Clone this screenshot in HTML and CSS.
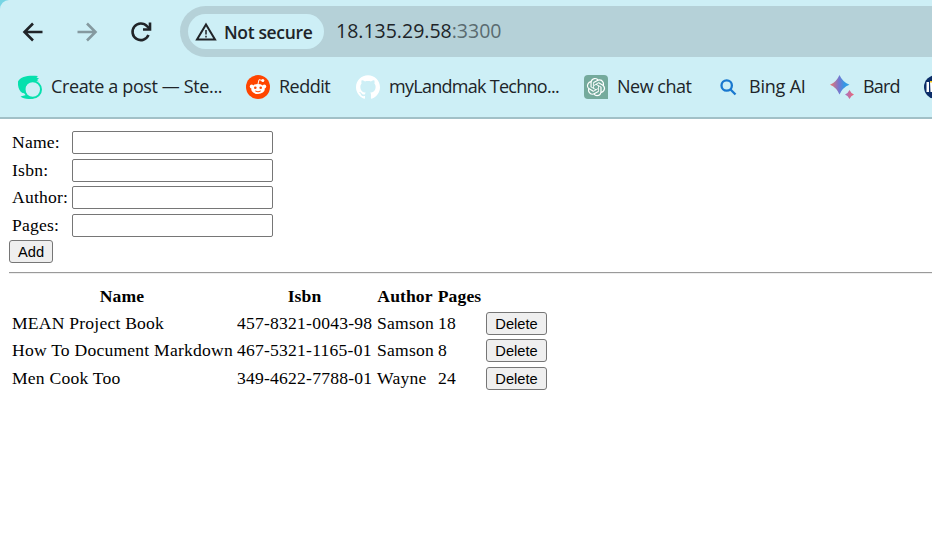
FILE: index.html
```html
<!DOCTYPE html>
<html lang="en">
<head>
<meta charset="utf-8">
<title>Books</title>
<link rel="stylesheet" href="styles.css">
</head>
<body>
<div class="frame">
<header class="chrome">
  <div class="toolbar">
    <svg class="nav back" viewBox="0 0 24 24"><path d="M21.5 12H4M12 3.5 3.5 12l8.500 8.500"/></svg>
    <svg class="nav forward" viewBox="0 0 24 24"><path d="M2.500 12H20M12 3.500 20.500 12 12 20.500"/></svg>
    <svg class="nav reload" viewBox="0 0 24 24"><path d="M19.500 15A8.300 8.300 0 1 1 18 6.200L20.500 8.700"/><path d="M21 2.500V9.500H14"/></svg>
    <div class="omnibox">
      <div class="security">
        <svg viewBox="0 0 22 20"><path d="M11 2.500 20 17.500H2Z"/><path class="mark" d="M11 8v4.500M11 13.700v1.800"/></svg>
        <span>Not secure</span>
      </div>
      <span class="url">18.135.29.58<span class="port">:3300</span></span>
    </div>
  </div>
  <nav class="bookmarks">
    <a class="bm b1"><svg viewBox="0 0 24 24"><circle cx="14.700" cy="14.500" r="8.300" fill="none" stroke="#06e0ad" stroke-width="2"/><path fill="#06e0ad" d="M0 6.500C3 1 11 0 20 1l-1.500 1.500L21 3.500 19 5l2 1.500C12 4.500 7 9 7.300 14.500c0 2 .5 3 1 4L4.500 18C1 16-.5 11 0 6.500ZM2.500 21.500 8 20l5 2.500 3 .8C12 25 5 23.500 2.500 21.500Z"/></svg><span>Create a post — Ste...</span></a>
    <a class="bm b2"><svg viewBox="0 0 24 24"><circle cx="12" cy="12" r="12" fill="#ff4500"/><path d="m12 9 1-4.300 3.500.8" fill="none" stroke="#fff" stroke-width="1"/><g fill="#fff"><circle cx="16.800" cy="5.600" r="1.500"/><circle cx="5.700" cy="11.500" r="1.900"/><circle cx="18.300" cy="11.500" r="1.900"/><ellipse cx="12" cy="14" rx="6.800" ry="5.100"/></g><g fill="#ff4500"><circle cx="9.300" cy="12.800" r="1.300"/><circle cx="14.700" cy="12.800" r="1.300"/></g><path d="M9.300 16q2.700 1.700 5.400 0" stroke="#ff4500" fill="none"/></svg><span>Reddit</span></a>
    <a class="bm b3"><svg viewBox="0 0 24 24"><path fill="#fff" d="M12 .297c-6.630 0-12 5.373-12 12 0 5.303 3.438 9.800 8.205 11.385.6.113.82-.258.82-.577 0-.285-.01-1.040-.015-2.040-3.338.724-4.042-1.610-4.042-1.610C4.422 18.070 3.633 17.700 3.633 17.700c-1.087-.744.084-.729.084-.729 1.205.084 1.838 1.236 1.838 1.236 1.070 1.835 2.809 1.305 3.495.998.108-.776.417-1.305.76-1.605-2.665-.3-5.466-1.332-5.466-5.930 0-1.310.465-2.380 1.235-3.220-.135-.303-.54-1.523.105-3.176 0 0 1.005-.322 3.300 1.230.96-.267 1.980-.399 3-.405 1.020.006 2.040.138 3 .405 2.280-1.552 3.285-1.230 3.285-1.230.645 1.653.24 2.873.12 3.176.765.840 1.230 1.910 1.230 3.220 0 4.610-2.805 5.625-5.475 5.920.42.360.81 1.096.81 2.220 0 1.606-.015 2.896-.015 3.286 0 .315.21.690.825.570C20.565 22.092 24 17.592 24 12.297c0-6.627-5.373-12-12-12"/></svg><span>myLandmak Techno...</span></a>
    <a class="bm b4"><svg viewBox="0 0 24 24"><path d="M4 0h16a4 4 0 0 1 4 4v20H4a4 4 0 0 1-4-4V4a4 4 0 0 1 4-4Z" fill="#74aa9c"/><path transform="translate(2.900 2.900) scale(.76)" fill="#fff" d="M22.282 9.821a5.985 5.985 0 0 0-.516-4.911 6.046 6.046 0 0 0-6.510-2.900A6.065 6.065 0 0 0 4.981 4.182a5.985 5.985 0 0 0-3.998 2.900 6.046 6.046 0 0 0 .743 7.097 5.980 5.980 0 0 0 .511 4.911 6.051 6.051 0 0 0 6.515 2.900A5.985 5.985 0 0 0 13.260 24a6.056 6.056 0 0 0 5.772-4.206 5.990 5.990 0 0 0 3.998-2.900 6.056 6.056 0 0 0-.748-7.073zM13.260 22.430a4.476 4.476 0 0 1-2.876-1.041l.141-.081 4.779-2.758a.795.795 0 0 0 .393-.681v-6.737l2.020 1.169a.071.071 0 0 1 .038.052v5.583a4.504 4.504 0 0 1-4.495 4.494zM3.600 18.304a4.471 4.471 0 0 1-.535-3.014l.142.085 4.783 2.759a.771.771 0 0 0 .781 0l5.843-3.369v2.332a.080.080 0 0 1-.033.062L9.740 19.950a4.500 4.500 0 0 1-6.140-1.646zM2.341 7.896a4.485 4.485 0 0 1 2.365-1.973V11.600a.766.766 0 0 0 .388.677l5.814 3.354-2.020 1.169a.076.076 0 0 1-.071 0l-4.830-2.787A4.504 4.504 0 0 1 2.341 7.872zm16.597 3.855-5.833-3.387L15.119 7.200a.076.076 0 0 1 .071 0l4.830 2.791a4.494 4.494 0 0 1-.677 8.105v-5.678a.790.790 0 0 0-.405-.667zm2.011-3.023-.142-.085-4.774-2.782a.776.776 0 0 0-.785 0L9.409 9.230V6.897a.066.066 0 0 1 .028-.062l4.830-2.787a4.499 4.499 0 0 1 6.680 4.660zM8.307 12.863l-2.020-1.164a.080.080 0 0 1-.038-.057V6.075a4.499 4.499 0 0 1 7.376-3.454l-.142.081-4.778 2.758a.795.795 0 0 0-.393.681zm1.097-2.366 2.602-1.500 2.607 1.500v2.999l-2.597 1.500-2.607-1.500z"/></svg><span>New chat</span></a>
    <a class="bm b5"><svg viewBox="0 0 24 24"><g fill="none" stroke="#1878cf" stroke-width="2.300"><circle cx="10.700" cy="10.500" r="5.200"/><path d="m14.500 14.500 5 5"/></g></svg><span>Bing AI</span></a>
    <a class="bm b6"><svg viewBox="0 0 24 24"><defs><linearGradient id="spark"><stop offset="0" stop-color="#f47768"/><stop offset=".45" stop-color="#7776ce"/><stop offset=".75" stop-color="#3399e6"/><stop offset="1" stop-color="#32a3e5"/></linearGradient><linearGradient id="spark2"><stop stop-color="#a574c4"/><stop offset="1" stop-color="#ee6673"/></linearGradient></defs><path fill="url(#spark)" d="M9.500 0Q12.500 7 19.500 9.800 12.500 12.500 9.500 19.500 6.500 12.500 0 9.800 6.500 7 9.500 0Z"/><path fill="url(#spark2)" d="M19.500 15q1.400 3.200 4.500 4.500-3.100 1.400-4.500 4.500-1.400-3.100-4.500-4.500 3.100-1.300 4.500-4.500Z"/></svg><span>Bard</span></a>
    <a class="bm b7"><svg viewBox="0 0 24 24"><circle cx="12" cy="12" r="12" fill="#0b2d68"/><path fill="#fff" d="M2.500 7H5v10H2.500zM6 7h10v2H9v8H6.500z"/><path fill="#f5c518" d="M6 6h2v1.500H6z"/></svg></a>
  </nav>
</header>
<main>
  <table class="form">
    <tr><td class="label"><span>Name:</span></td><td><input type="text"></td></tr>
    <tr class="short"><td class="label"><span>Isbn:</span></td><td><input type="text"></td></tr>
    <tr><td class="label"><span>Author:</span></td><td><input type="text"></td></tr>
    <tr class="short"><td class="label"><span>Pages:</span></td><td><input type="text"></td></tr>
  </table>
  <button class="add">Add</button>
  <hr>
  <table class="books">
    <colgroup><col class="c-name"><col class="c-isbn"><col class="c-author"><col class="c-pages"><col class="c-action"></colgroup>
    <tr class="head"><th>Name</th><th>Isbn</th><th>Author</th><th>Pages</th><th></th></tr>
    <tr class="short"><td>MEAN Project Book</td><td>457-8321-0043-98</td><td>Samson</td><td>18</td><td><button>Delete</button></td></tr>
    <tr><td>How To Document Markdown</td><td>467-5321-1165-01</td><td>Samson</td><td>8</td><td><button>Delete</button></td></tr>
    <tr class="short"><td>Men Cook Too</td><td>349-4622-7788-01</td><td>Wayne</td><td>24</td><td><button>Delete</button></td></tr>
  </table>
</main>
</div>
</body>
</html>
```
FILE: styles.css
```css
* { box-sizing: border-box; }
body { margin: 0; background: #fff; font: 17.6px/20px "Liberation Serif", serif; color: #000; }
.frame { width: 932px; height: 537px; overflow: hidden; background: linear-gradient(#76d5e4 0 12px, #fff 12px); }
.chrome { height: 119px; border-bottom: 2px solid #a1c0c7; background: #cdeff6; border-top-left-radius: 9px; font-family: "Open Sans", sans-serif; color: #202428; }
.toolbar { display: flex; align-items: center; height: 63px; padding-left: 21px; }
.nav { width: 24px; height: 24px; margin-right: 30px; fill: none; stroke: #202428; stroke-width: 2.600; flex: none; }
.forward { stroke: #85999f; }
.reload { margin-right: 27px; }
.omnibox { display: flex; align-items: center; flex: none; width: 780px; height: 51px; padding-left: 8px; border-radius: 26px; background: #b5d1d8; }
.security { display: flex; align-items: center; width: 136px; height: 35px; padding-left: 7px; border-radius: 18px; background: #cdeff6; font-size: 17.500px; font-weight: 600; letter-spacing: -0.350px; white-space: nowrap; }
.security svg { width: 22px; height: 20px; margin-right: 7px; fill: none; stroke: #202428; stroke-width: 2; flex: none; }
.security .mark { stroke-width: 1.500; }
.url { margin-left: 12px; padding-bottom: 1px; font-size: 19.500px; white-space: nowrap; }
.port { color: #5a6b70; }
.bookmarks { display: flex; height: 48px; align-items: center; padding-left: 18px; }
.bm { display: flex; align-items: center; gap: 9px; flex: none; height: 24px; font-size: 18px; white-space: nowrap; }
.bm svg { width: 24px; height: 24px; flex: none; }
.bm span { padding-bottom: 2px; }
.b1 { width: 228px; letter-spacing: -0.380px; }
.b2 { width: 110px; letter-spacing: -0.500px; }
.b3 { width: 228px; letter-spacing: -0.720px; }
.b4 { width: 132px; letter-spacing: -0.500px; }
.b5 { width: 114px; letter-spacing: -0.200px; }
.b6 { width: 94px; letter-spacing: -0.800px; }
main { display: flow-root; padding: 10px 0 0 9px; }
table { border-collapse: collapse; table-layout: fixed; letter-spacing: 0.210px; }
tr { height: 28px; }
tr.short { height: 27px; }
td, th { height: inherit; padding: 3px 0 0 3px; vertical-align: top; white-space: nowrap; }
th { padding: 2px 0 0 1px; letter-spacing: 0.100px; }
.form { width: 264px; }
.label { width: 63px; }
.form td { padding-top: 2px; }
.form td span { display: block; padding-top: 1px; }
input { display: block; margin: 0; width: 201px; height: 23px; padding: 1px 2px; border: 1px solid #767676; border-radius: 2px; background: #fff; }
.form td + td { padding-left: 0; }
button { display: block; width: 61px; height: 23px; margin: 0; padding: 0; border: 1px solid #767676; border-radius: 3px; background: #efefef; color: #000; font: 14.667px/20px "Liberation Sans", sans-serif; }
.add { width: 44px; margin-top: 1px; }
hr { height: 2px; margin: 9px 0 10px; border: 0; border-top: 1px solid #9a9a9a; border-bottom: 1px solid #eee; }
.books { width: 538px; }
.c-name { width: 225px; }
.c-isbn { width: 140px; }
.c-author { width: 61px; }
.c-pages { width: 48px; }
.c-action { width: 64px; }
.head { height: 26px; }
.books td:last-child { padding-top: 2px; }
```
